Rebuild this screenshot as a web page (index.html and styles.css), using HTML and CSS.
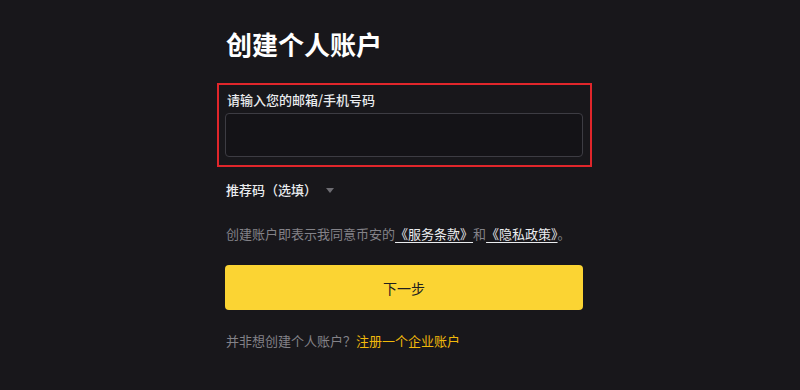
FILE: index.html
```html
<!DOCTYPE html>
<html lang="zh">
<head>
<meta charset="utf-8">
<link rel="stylesheet" href="styles.css">
</head>
<body>
<main class="page">
  <section class="form">
    <h1 class="title">创建个人账户</h1>
    <div class="highlight">
      <label class="label">请输入您的邮箱/手机号码</label>
      <div class="input"></div>
    </div>
    <div class="referral">推荐码（选填）<span class="caret"></span></div>
    <p class="terms">创建账户即表示我同意币安的<a class="link">《服务条款》</a>和<a class="link">《隐私政策》</a>。</p>
    <button class="btn">下一步</button>
    <p class="alt">并非想创建个人账户？<a class="alt-link">注册一个企业账户</a></p>
  </section>
</main>
</body>
</html>
```
FILE: styles.css
```css
* { box-sizing: border-box; }
html, body { margin: 0; padding: 0; }
body {
  background: #18171b;
  width: 800px;
  height: 390px;
  overflow: hidden;
  font-family: "Noto Sans CJK SC", "Noto Sans", sans-serif;
  color: #eaecef;
}
.page {
  display: flex;
  padding-left: 225px;
}
.form {
  width: 358px;
  display: flex;
  flex-direction: column;
}
.title {
  margin: 26px 0 0 1px;
  font-size: 26px;
  line-height: 36px;
  font-weight: 700;
  color: #ffffff;
}
.highlight {
  margin: 21px 0 0 -8px;
  width: 375px;
  height: 84px;
  border: 2px solid #e0262b;
  padding: 6px 7px 0 6px;
}
.label {
  display: block;
  font-size: 13px;
  line-height: 18px;
  font-weight: 500;
  color: #eaecef;
  padding-left: 2px;
}
.input {
  margin-top: 4px;
  height: 44px;
  width: 358px;
  border: 1px solid #3d3c43;
  border-radius: 4px;
  background: #141317;
}
.referral {
  margin: 13px 0 0 1px;
  font-size: 13px;
  line-height: 20px;
  font-weight: 500;
  color: #eaecef;
  display: flex;
  align-items: center;
}
.caret {
  margin-left: 9px;
  width: 0;
  height: 0;
  border-left: 4px solid transparent;
  border-right: 4px solid transparent;
  border-top: 5px solid #6d6c72;
}
.terms {
  margin: 24px 0 0 1px;
  font-size: 13px;
  line-height: 20px;
  color: #838288;
}
.link {
  color: #eaecef;
  text-decoration: underline;
  text-underline-offset: 3px;
}
.btn {
  margin-top: 21px;
  height: 45px;
  width: 358px;
  border: none;
  border-radius: 4px;
  background: #fbd433;
  color: #202020;
  font-family: inherit;
  font-size: 14px;
}
.alt {
  margin: 21px 0 0 1px;
  font-size: 13px;
  line-height: 20px;
  color: #838288;
}
.alt-link {
  color: #f0b90b;
}
```
